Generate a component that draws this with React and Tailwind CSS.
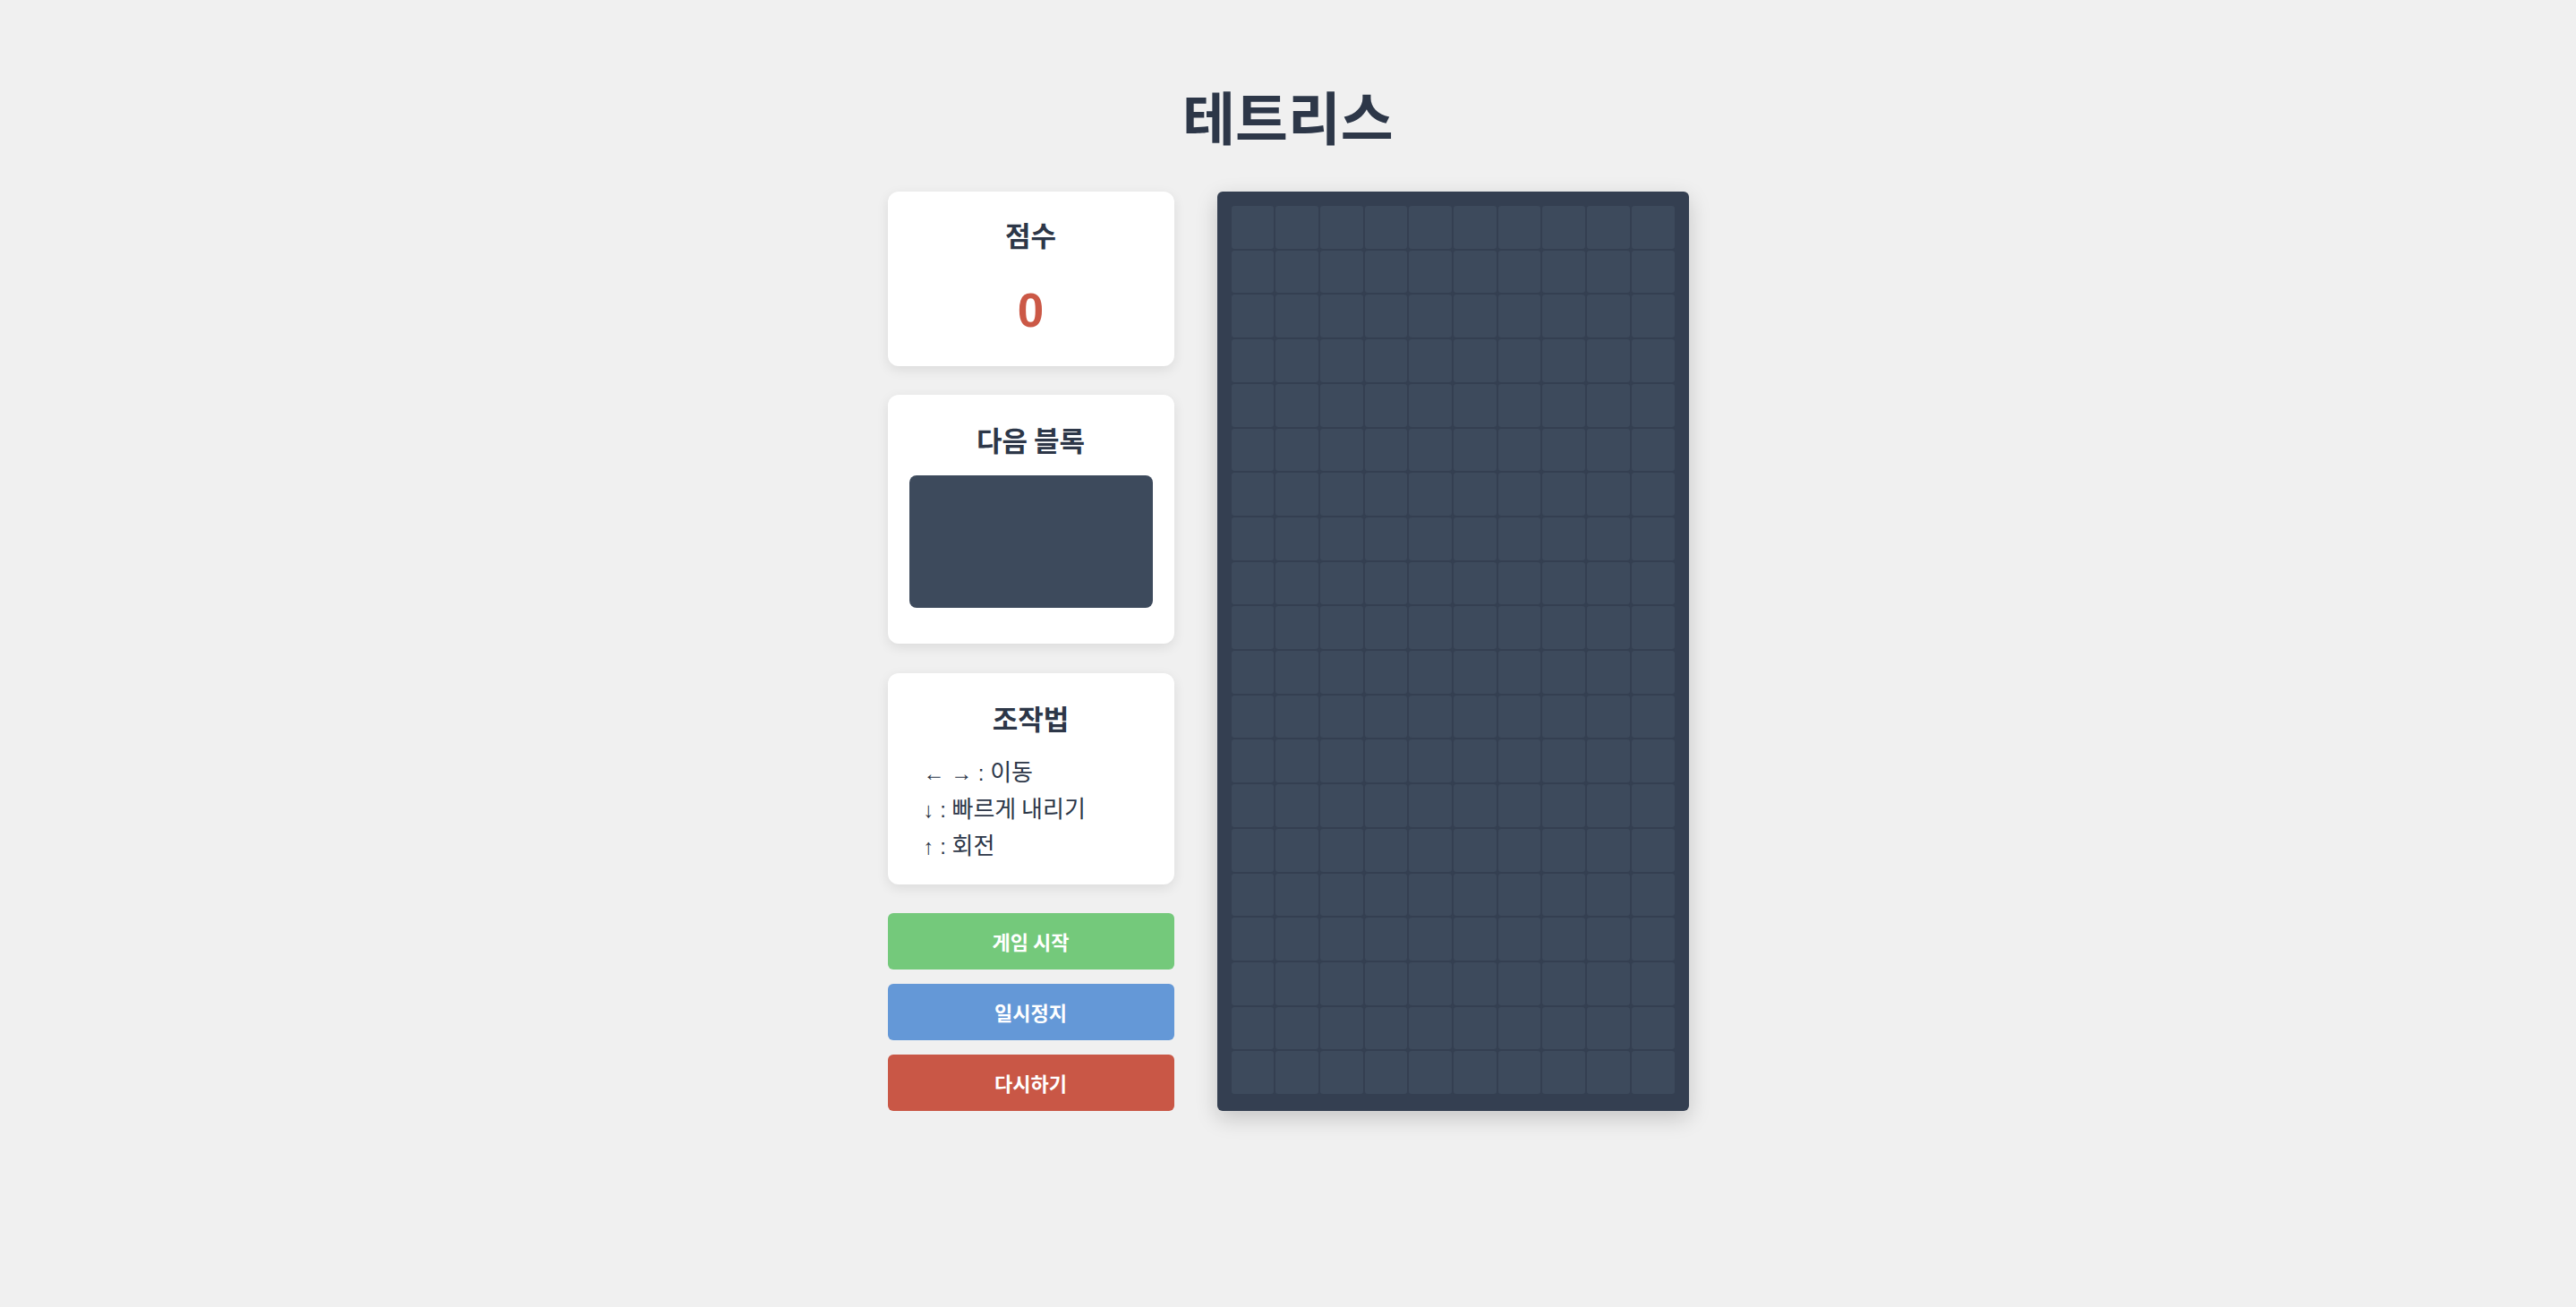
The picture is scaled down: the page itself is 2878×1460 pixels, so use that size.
import React from 'react';

const font = { fontFamily: '"Noto Sans CJK KR", "Noto Sans", sans-serif' };

const cells = Array.from({ length: 200 }, (_, i) => i);

const controls = [
  ['← → : ', '이동'],
  ['↓ : ', '빠르게 내리기'],
  ['↑ : ', '회전'],
];

function Card({ title, children, className = '' }) {
  return (
    <div className={`bg-white rounded-xl shadow-[0_4px_14px_rgba(0,0,0,0.09)] px-6 ${className}`}>
      <h2 className="text-center text-[31px] leading-[40px] font-bold text-[#2d3748]">{title}</h2>
      {children}
    </div>
  );
}

export default function App() {
  return (
    <div className="min-h-screen bg-[#f0f0f0] flex flex-col items-center pt-[84px]" style={font}>
      <h1 className="text-[64px] leading-[88px] font-bold text-[#2d3748] mb-[42px]">테트리스</h1>
      <div className="flex gap-[48px] items-start">
        <div className="w-[320px] flex flex-col">
          <Card title="점수" className="h-[195px] pt-[28px]">
            <div className="text-center mt-[35px] text-[53px] leading-[60px] font-bold text-[#cb5846]" style={{ fontFamily: '"Liberation Sans", Arial, sans-serif' }}>0</div>
          </Card>
          <Card title="다음 블록" className="h-[278px] pt-[30px] mt-[32px]">
            <div className="mt-[20px] h-[148px] rounded-lg bg-[#3d4a5c]"></div>
          </Card>
          <Card title="조작법" className="h-[236px] pt-[30px] mt-[33px]">
            <ul className="mt-[18px] pl-[16px] text-[26px] text-[#2d3748]">
              {controls.map(([keys, label]) => (
                <li key={label} className="h-[41px] leading-[41px]">
                  <span className="text-[24px] leading-none" style={{ fontFamily: '"Liberation Sans", Arial, sans-serif' }}>{keys}</span>
                  {label}
                </li>
              ))}
            </ul>
          </Card>
          <div className="flex flex-col gap-4 mt-[32px]">
            <button className="h-[63px] rounded-md bg-[#74c97b] text-white text-[22px] font-bold">게임 시작</button>
            <button className="h-[63px] rounded-md bg-[#6498d7] text-white text-[22px] font-bold">일시정지</button>
            <button className="h-[63px] rounded-md bg-[#c95746] text-white text-[22px] font-bold">다시하기</button>
          </div>
        </div>
        <div className="w-[527px] h-[1027px] bg-[#343f51] rounded-md p-4 pb-[18px] shadow-[0_8px_24px_rgba(0,0,0,0.18)]">
          <div className="grid grid-cols-10 gap-[2px]">
            {cells.map(i => (
              <div key={i} className="aspect-square rounded-[3px] bg-[#3d4a5c]"></div>
            ))}
          </div>
        </div>
      </div>
    </div>
  );
}
